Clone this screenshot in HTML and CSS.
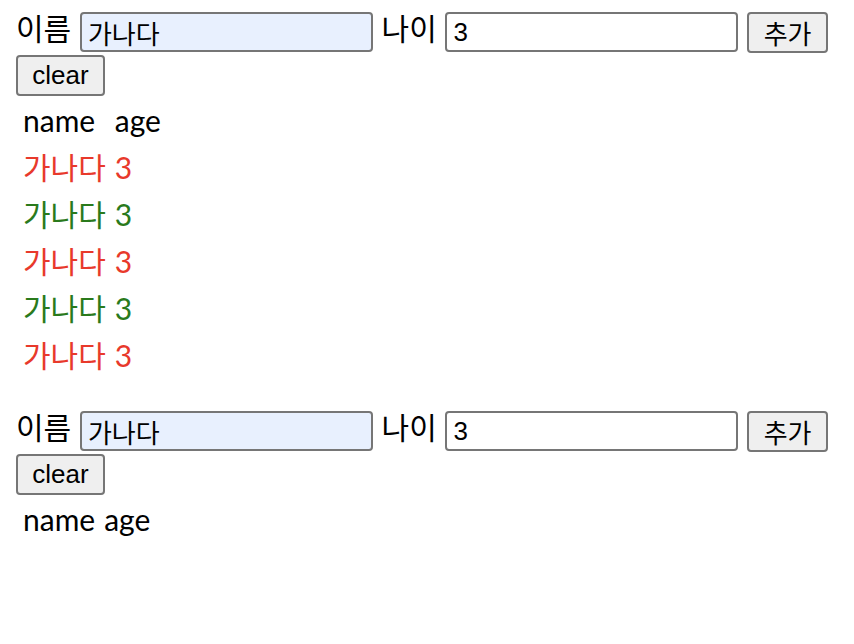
FILE: index.html
```html
<!DOCTYPE html>
<html>
<head>
    <title>List</title>
    <meta charset="utf-8" />
    <link rel="stylesheet" href="styles.css">
</head>
<body>
    <div class="section">
        <div class="formrow">
            이름 <input type="text" class="nameinput" value="가나다">
            나이 <input type="text" class="ageinput" value="3">
            <input type="button" class="btn" value="추가">
        </div>
        <input type="button" class="btn clearbtn" value="clear">
        <table class="list">
            <thead>
                <tr><td>name</td><td>age</td></tr>
            </thead>
            <tbody>
                <tr class="red"><td>가나다</td><td>3</td></tr>
                <tr class="green"><td>가나다</td><td>3</td></tr>
                <tr class="red"><td>가나다</td><td>3</td></tr>
                <tr class="green"><td>가나다</td><td>3</td></tr>
                <tr class="red"><td>가나다</td><td>3</td></tr>
            </tbody>
        </table>
    </div>
    <div class="section">
        <div class="formrow">
            이름 <input type="text" class="nameinput" value="가나다">
            나이 <input type="text" class="ageinput" value="3">
            <input type="button" class="btn" value="추가">
        </div>
        <input type="button" class="btn clearbtn" value="clear">
        <table class="list">
            <thead>
                <tr><td>name</td><td>age</td></tr>
            </thead>
            <tbody>
            </tbody>
        </table>
    </div>
</body>
</html>
```

FILE: styles.css
```css
body {
    margin: 6px 16px;
    font-family: "Lato", "Noto Sans CJK KR", sans-serif;
    font-size: 30px;
    color: black;
    background: white;
}

.section {
    margin-bottom: 24px;
}

.formrow {
    height: 49px;
    line-height: 44px;
    white-space: nowrap;
}

input[type=text] {
    box-sizing: border-box;
    width: 293px;
    height: 40px;
    border: 2px solid #767676;
    border-radius: 4px;
    padding: 0 6px;
    font-family: "Liberation Sans", "Noto Sans CJK KR", sans-serif;
    font-size: 26px;
    vertical-align: middle;
    margin: 0 1px 0 1px;
}

.nameinput {
    background-color: #e8f0fe;
}

.ageinput {
    background-color: white;
}

.btn {
    box-sizing: border-box;
    height: 41px;
    padding: 0 14.5px;
    border: 2px solid #767676;
    border-radius: 4px;
    background-color: #efefef;
    font-family: "Liberation Sans", "Noto Sans CJK KR", sans-serif;
    font-size: 26px;
    color: black;
    vertical-align: middle;
    margin-left: 0;
}

.clearbtn {
    display: block;
    margin: 0;
    width: 89px;
    padding: 0;
}

.list {
    border-spacing: 4px;
    margin-top: -1px;
}

.list td {
    padding: 2px 2px 2px 3px;
    line-height: 39px;
}

.red td {
    color: #e8392b;
}

.green td {
    color: #2a7a1c;
}
```
